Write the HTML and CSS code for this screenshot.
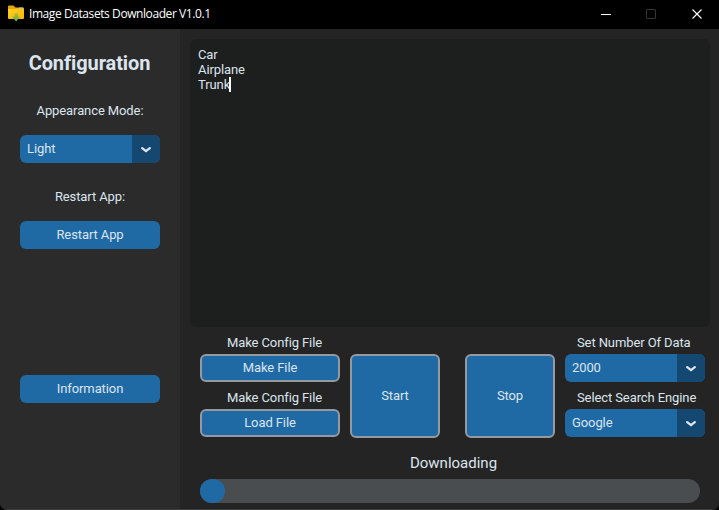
FILE: index.html
```html
<!DOCTYPE html>
<html lang="en">
<head>
<meta charset="utf-8">
<title>Image Datasets Downloader V1.0.1</title>
<link rel="stylesheet" href="styles.css">
</head>
<body>
<div class="window">
  <header class="titlebar">
    <svg class="app-icon" width="18" height="18" viewBox="0 0 18 18">
      <defs>
        <linearGradient id="folder" x2="1" y2="1"><stop stop-color="#ffd321"/><stop offset="1" stop-color="#f5b40c"/></linearGradient>
        <linearGradient id="down" x2="0" y2="1"><stop stop-color="#b0bd28"/><stop offset="1" stop-color="#5fa95a"/></linearGradient>
      </defs>
      <path d="M1 1.500Q1 .5 2 .5h4.500l2 2H16q1 0 1 1v3H1z" fill="#e9a311"/>
      <path d="M12 2.500h4v1.500h-4z" fill="#8fc5d8"/>
      <path d="M1 4h7l1.500-.5H16q1 0 1 1V13q0 1-1 1H2q-1 0-1-1z" fill="url(#folder)"/>
      <path d="M7.500 8.500h3.500v3.200h2L9.200 16.500 5 11.700h2.500z" fill="url(#down)"/>
    </svg>
    <span class="app-title">Image Datasets Downloader V1.0.1</span>
    <svg class="controls" width="104" height="12" viewBox="0 0 104 12" fill="none">
      <path d="M0 6.500h10" stroke="#fff"/>
      <rect x="45.500" y="1.500" width="9" height="9" rx=".5" stroke="#343434"/>
      <path d="M91.500 1.500l9 9m0-9l-9 9" stroke="#fff" stroke-width="1.150"/>
    </svg>
  </header>
  <div class="content">
    <aside class="sidebar">
      <h1 class="heading">Configuration</h1>
      <div class="label mode-label">Appearance Mode:</div>
      <div class="select"><span class="value">Light</span><span class="arrow"><svg width="10" height="6" viewBox="0 0 10 6"><path d="M1.200 1.200L5 4.200l3.800-3"/></svg></span></div>
      <div class="label restart-label">Restart App:</div>
      <button class="btn">Restart App</button>
      <button class="btn info">Information</button>
    </aside>
    <main class="main">
      <div class="textbox">Car<br>Airplane<br>Trunk<span class="caret"></span></div>
      <div class="panel">
        <div class="files">
          <div class="label field-label">Make Config File</div>
          <button class="btn outlined">Make File</button>
          <div class="label field-label">Make Config File</div>
          <button class="btn outlined">Load File</button>
        </div>
        <button class="btn outlined tall">Start</button>
        <button class="btn outlined tall stop">Stop</button>
        <div class="options">
          <div class="label field-label left">Set Number Of Data</div>
          <div class="select"><span class="value">2000</span><span class="arrow"><svg width="10" height="6" viewBox="0 0 10 6"><path d="M1.200 1.200L5 4.200l3.800-3"/></svg></span></div>
          <div class="label field-label left">Select Search Engine</div>
          <div class="select"><span class="value">Google</span><span class="arrow"><svg width="10" height="6" viewBox="0 0 10 6"><path d="M1.200 1.200L5 4.200l3.800-3"/></svg></span></div>
        </div>
      </div>
      <div class="status">Downloading</div>
      <div class="progress"><div class="bar"></div></div>
    </main>
  </div>
</div>
</body>
</html>
```

FILE: styles.css
```css
* { box-sizing: border-box; }

body {
  margin: 0;
  background: #000;
  font: 13px/15px Roboto, sans-serif;
  letter-spacing: -0.1px;
  color: #dce4ee;
}

.window {
  display: flex;
  flex-direction: column;
  width: 719px;
  height: 510px;
  overflow: hidden;
  border-bottom: 1px solid #3c3c3c;
  border-radius: 0 0 7px 7px;
}

.titlebar {
  display: flex;
  align-items: center;
  flex: 0 0 29px;
  padding: 0 14px 2px 7px;
  background: #000;
  color: #fff;
}

.app-icon { margin-right: 4px; }

.app-title {
  font: 12px/18px "Open Sans", sans-serif;
  letter-spacing: -0.42px;
}

.controls { margin-left: auto; }

.content {
  display: flex;
  flex: 1;
  background: #242424;
}

.sidebar {
  width: 180px;
  padding: 20px 20px 0;
  background: #2b2b2b;
}

.heading {
  margin: 0;
  padding-right: 1px;
  font-size: 20px;
  line-height: 28px;
  text-align: center;
  white-space: nowrap;
}

.label {
  line-height: 28px;
  text-align: center;
  white-space: nowrap;
}

.mode-label { margin: 20px 0 10px; }
.restart-label { margin: 20px 0 10px; }

.btn {
  display: block;
  width: 140px;
  height: 28px;
  padding: 0 0 2px;
  border: 0;
  border-radius: 6px;
  background: #1f6aa5;
  color: #dce4ee;
  font: inherit;
  letter-spacing: inherit;
}

.info { margin-top: 126px; }

.select {
  display: flex;
  width: 140px;
  height: 28px;
  overflow: hidden;
  border-radius: 6px;
  background: #1f6aa5;
}

.value {
  flex: 1;
  padding-left: 7px;
  line-height: 28px;
}

.arrow {
  display: flex;
  align-items: center;
  justify-content: center;
  width: 28px;
  background: #144870;
}

.arrow svg {
  margin-top: 2px;
  fill: none;
  stroke: #dce4ee;
  stroke-width: 2.3;
  stroke-linecap: round;
  stroke-linejoin: round;
}

.main {
  flex: 1;
  padding: 10px 9px 0 10px;
}

.textbox {
  height: 288px;
  padding: 8px;
  border-radius: 6px;
  background: #1d1e1e;
}

.caret {
  display: inline-block;
  width: 2px;
  height: 15px;
  margin-left: -1px;
  vertical-align: top;
  background: #fff;
}

.panel {
  display: flex;
  padding: 4px 0 0 10px;
}

.field-label {
  height: 23px;
  line-height: 23px;
}

.files .field-label { padding-left: 9px; }
.left { padding-left: 12px; text-align: left; }

.field-label:nth-child(3) { height: 27px; line-height: 31px; }

.outlined { border: 2px solid #949a9f; }

.tall {
  width: 90px;
  height: 84px;
  margin: 23px 0 0 10px;
}

.stop { margin-left: 25px; }
.options { margin-left: 10px; }

.status {
  margin-top: 11px;
  padding: 0 1px 0 8px;
  font-size: 15px;
  line-height: 28px;
  letter-spacing: 0;
  text-align: center;
}

.progress {
  width: 500px;
  height: 24px;
  margin: 2px 0 0 10px;
  border-radius: 12px;
  background: #4a4d50;
}

.bar {
  width: 25px;
  height: 24px;
  border-radius: 12px;
  background: #1f6aa5;
}
```
